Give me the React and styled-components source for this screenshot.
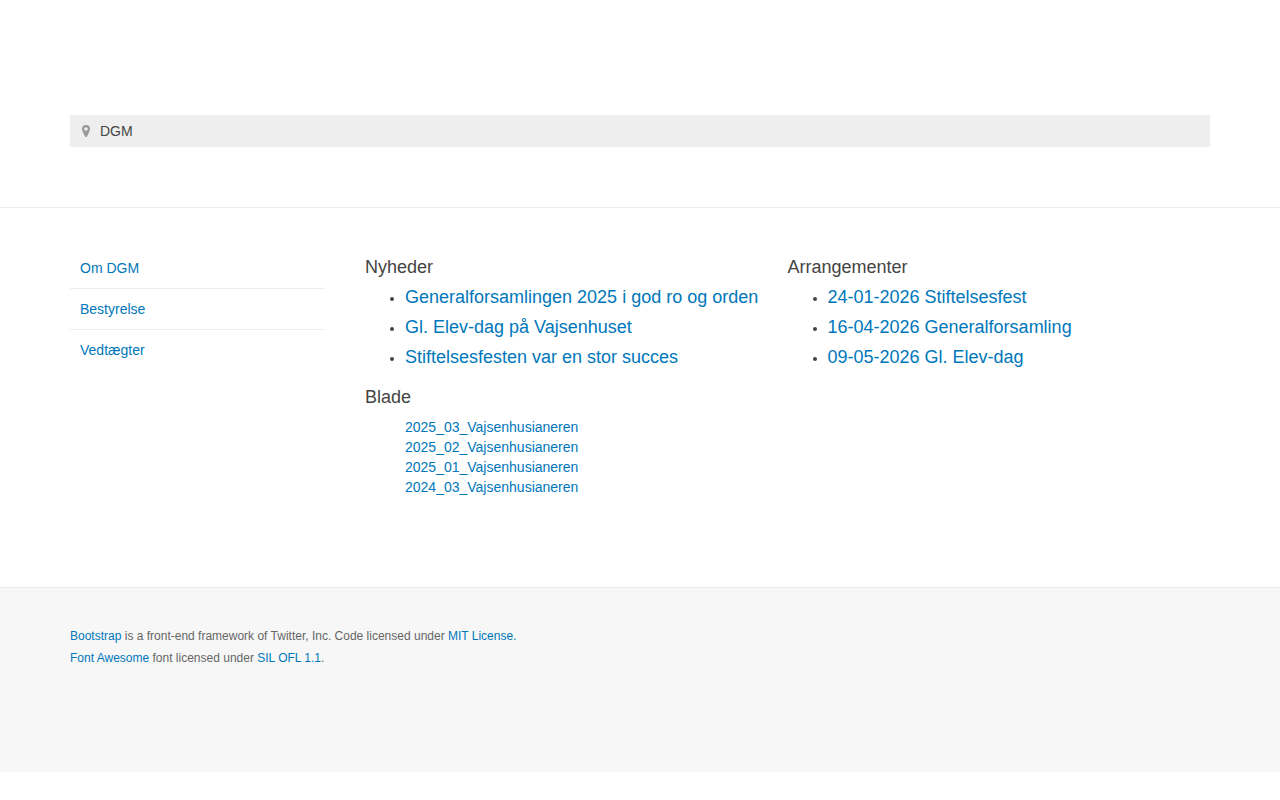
import styled, { createGlobalStyle } from "styled-components";

const GlobalStyle = createGlobalStyle`
  * {
    box-sizing: border-box;
  }

  body {
    margin: 0;
    background: #fff;
    color: #444;
    font-family: "Liberation Sans", Arial, Helvetica, sans-serif;
    font-size: 14px;
    line-height: 20px;
  }
`;

const Container = styled.div`
  max-width: 1170px;
  margin: 0 auto;
  padding: 0 15px;
`;

const Link = styled.a`
  color: #0077bb;
  text-decoration: none;

  &:hover {
    text-decoration: underline;
  }
`;

const Header = styled.header`
  padding: 115px 0 60px;
  border-bottom: 1px solid #eee;
`;

const Breadcrumb = styled.nav`
  display: flex;
  align-items: center;
  gap: 8px;
  padding: 6px 10px;
  background: #eee;
`;

const Marker = styled.svg`
  width: 12px;
  height: 14px;
  fill: #999;
`;

const Columns = styled(Container)`
  display: grid;
  grid-template-columns: 255px 1fr;
  column-gap: 40px;
  padding-top: 40px;
  padding-bottom: 80px;
`;

const SideMenu = styled.ul`
  margin: 0;
  padding: 0;
  list-style: none;
`;

const SideItem = styled.li`
  padding: 10px;

  & + & {
    border-top: 1px solid #eee;
  }
`;

const Content = styled.main`
  display: grid;
  grid-template-columns: 1fr 1fr;
  padding-top: 9px;
`;

const Heading = styled.h2`
  margin: 0 0 10px;
  font-size: 18px;
  font-weight: normal;
  line-height: 20px;
`;

const List = styled.ul`
  margin: 0 0 20px;
  padding: 0 0 0 40px;
`;

const ListTitle = styled.h3`
  margin: 0 0 10px;
  font-size: 18px;
  font-weight: normal;
  line-height: 20px;

  li:last-child > & {
    margin-bottom: 0;
  }
`;

const PlainList = styled.ul`
  margin: 0 0 10px;
  padding: 0 0 0 40px;
  list-style: none;
`;

const Footer = styled.footer`
  min-height: 185px;
  padding: 37px 0;
  border-top: 1px solid #eaeaea;
  background: #f7f7f7;
  color: #666;
  font-size: 12px;
  line-height: 22px;
`;

const FooterText = styled.p`
  margin: 0;
`;

const menu = ["Om DGM", "Bestyrelse", "Vedtægter"];

const news = [
  "Generalforsamlingen 2025 i god ro og orden",
  "Gl. Elev-dag på Vajsenhuset",
  "Stiftelsesfesten var en stor succes",
];

const events = [
  "24-01-2026 Stiftelsesfest",
  "16-04-2026 Generalforsamling",
  "09-05-2026 Gl. Elev-dag",
];

const magazines = [
  "2025_03_Vajsenhusianeren",
  "2025_02_Vajsenhusianeren",
  "2025_01_Vajsenhusianeren",
  "2024_03_Vajsenhusianeren",
];

const TitleList = ({ items }) => (
  <List>
    {items.map((item) => (
      <li key={item}>
        <ListTitle>
          <Link href="#">{item}</Link>
        </ListTitle>
      </li>
    ))}
  </List>
);

const App = () => {
  return (
    <>
      <GlobalStyle />
      <Header>
        <Container>
          <Breadcrumb>
            <Marker viewBox="0 0 12 14" aria-hidden="true">
              <path
                fillRule="evenodd"
                d="M6 1a4 4 0 0 0-4 4c0 .7.1 1.200.3 1.700L5 12.400c.2.400.6.600 1 .600s.8-.2 1-.6l2.700-5.700c.2-.5.3-1 .3-1.700a4 4 0 0 0-4-4zm0 2.200a1.800 1.800 0 1 1 0 3.600 1.800 1.800 0 0 1 0-3.600z"
              />
            </Marker>
            <span>DGM</span>
          </Breadcrumb>
        </Container>
      </Header>

      <Columns>
        <nav>
          <SideMenu>
            {menu.map((item) => (
              <SideItem key={item}>
                <Link href="#">{item}</Link>
              </SideItem>
            ))}
          </SideMenu>
        </nav>
        <Content>
          <section>
            <Heading>Nyheder</Heading>
            <TitleList items={news} />
            <Heading>Blade</Heading>
            <PlainList>
              {magazines.map((item) => (
                <li key={item}>
                  <Link href="#">{item}</Link>
                </li>
              ))}
            </PlainList>
          </section>
          <section>
            <Heading>Arrangementer</Heading>
            <TitleList items={events} />
          </section>
        </Content>
      </Columns>

      <Footer>
        <Container>
          <FooterText>
            <Link href="#">Bootstrap</Link> is a front-end framework of Twitter, Inc. Code licensed
            under <Link href="#">MIT License.</Link>
          </FooterText>
          <FooterText>
            <Link href="#">Font Awesome</Link> font licensed under <Link href="#">SIL OFL 1.1</Link>.
          </FooterText>
        </Container>
      </Footer>
    </>
  );
};

export default App;
